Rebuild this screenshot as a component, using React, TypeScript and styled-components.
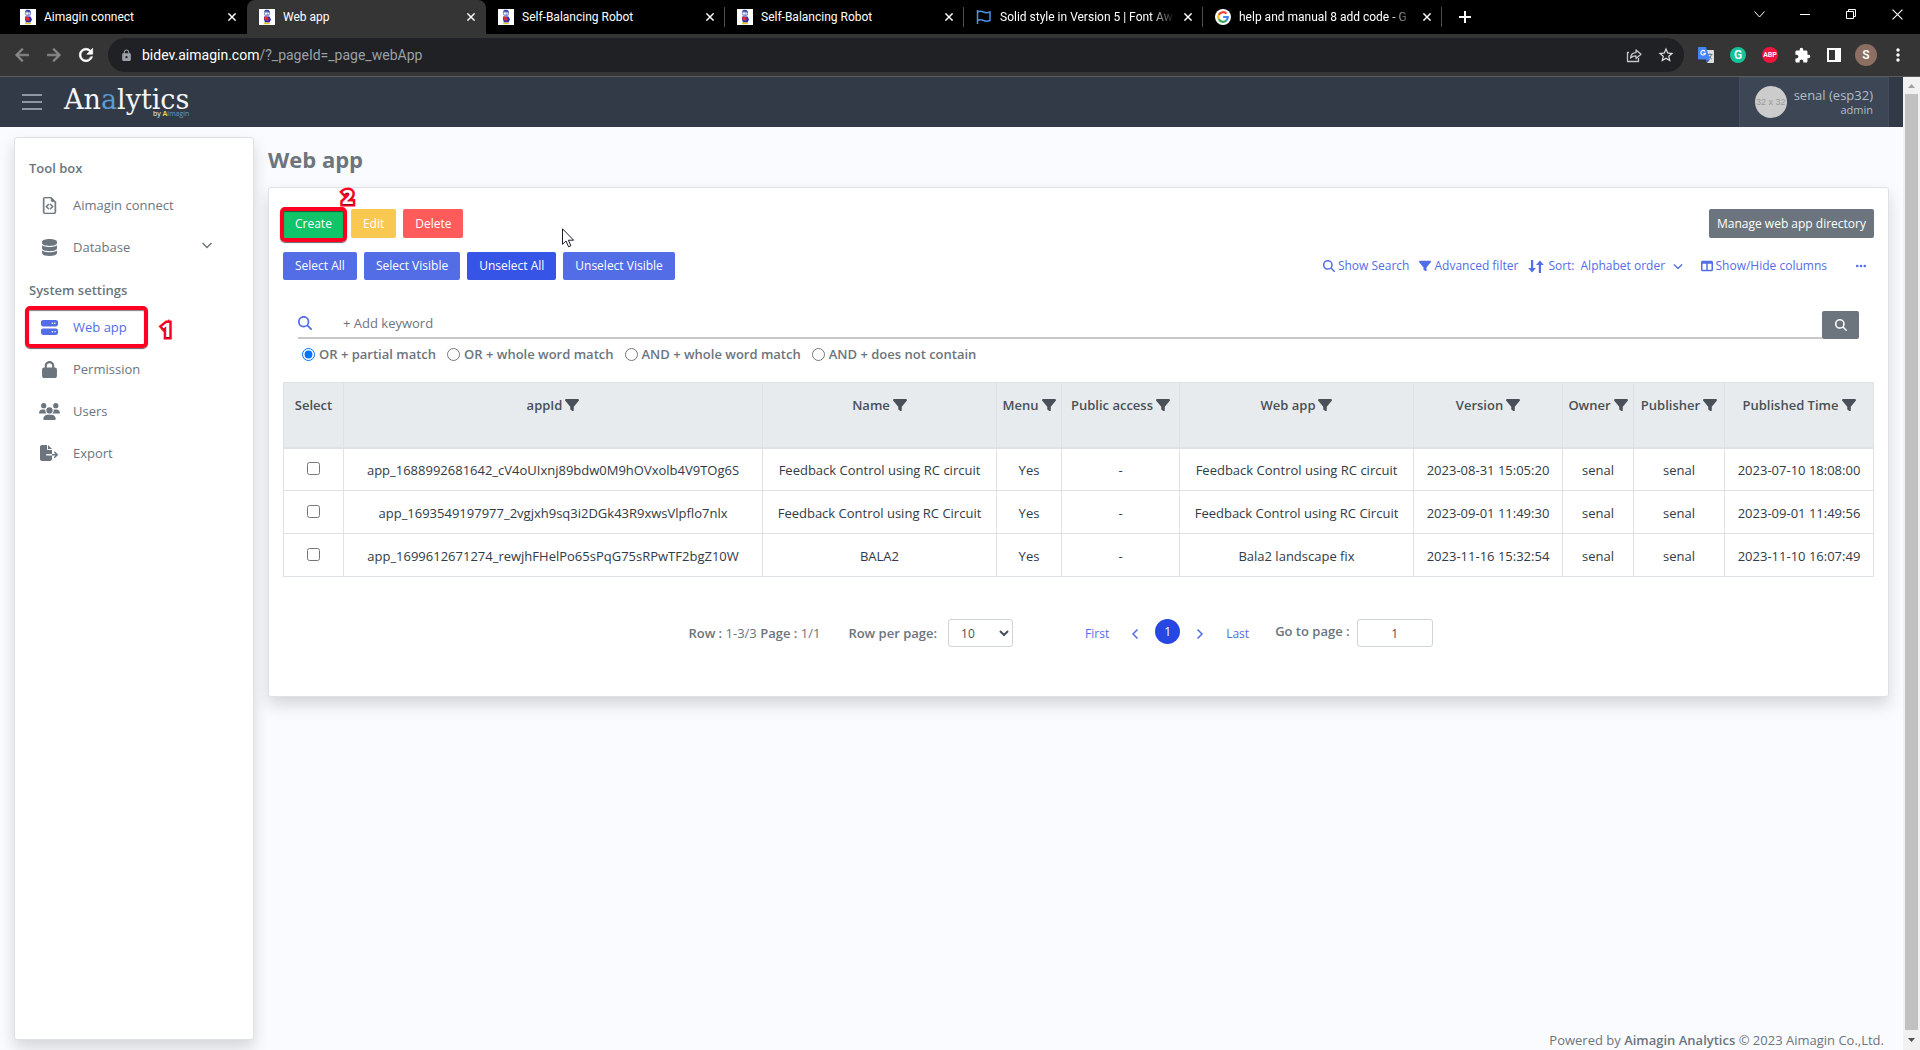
import React, { useState } from "react";
import styled, { createGlobalStyle, css } from "styled-components";
import {
  FaDatabase,
  FaServer,
  FaLock,
  FaUsers,
  FaFileExport,
  FaFilter,
  FaMagnifyingGlass,
  FaTableColumns,
  FaEllipsis,
  FaChevronDown,
} from "react-icons/fa6";
import { BsFileEarmarkCode } from "react-icons/bs";
import { MdArrowBack, MdArrowForward, MdRefresh, MdLock, MdStarBorder, MdExtension, MdMoreVert } from "react-icons/md";

const color = {
  page: "#fafbfe",
  text: "#6c757d",
  primary: "#536de6",
  primaryDark: "#3654e5",
  header: "#333a47",
  border: "#dee2e6",
  mark: "#fe0022",
};

const GlobalStyle = createGlobalStyle`
  *, *::before, *::after { box-sizing: border-box; }
  body {
    margin: 0;
    background: ${color.page};
    color: ${color.text};
    font: 400 13px/20px "Open Sans", "Noto Sans", sans-serif;
  }
  button, input, select { font: inherit; color: inherit; margin: 0; }
  button { padding: 0; border: 0; background: none; }
  a { color: inherit; text-decoration: none; }
  svg { display: block; flex: none; }
`;

const Window = styled.div`
  min-height: 100vh;
  display: flex;
  flex-direction: column;
`;

/* ---------- browser chrome ---------- */

const TabStrip = styled.div`
  display: flex;
  height: 34px;
  padding-left: 8px;
  background: #000;
  color: #fff;
  font: 12px/16px Roboto, sans-serif;
`;

const Tab = styled.div<{ $active?: boolean; $rule?: boolean }>`
  position: relative;
  flex: 0 1 239px;
  min-width: 0;
  display: flex;
  align-items: center;
  gap: 8px;
  padding: 0 10px 0 12px;
  ${(p) =>
    p.$active &&
    css`
      background: #353535;
      border-radius: 8px 8px 0 0;
    `}
  ${(p) =>
    p.$rule &&
    css`
      &::after {
        content: "";
        position: absolute;
        right: 0;
        top: 7px;
        height: 20px;
        width: 1px;
        background: #4d4d4d;
      }
    `}
`;

const TabTitle = styled.span<{ $fade?: boolean }>`
  flex: 1;
  overflow: hidden;
  white-space: nowrap;
  ${(p) =>
    p.$fade &&
    css`
      mask-image: linear-gradient(to right, #000 86%, transparent);
    `}
`;

const TabClose = styled.button`
  width: 10px;
  height: 16px;
  display: grid;
  place-items: center;
`;

const NewTab = styled.button`
  width: 46px;
  display: grid;
  place-items: center;
`;

const WindowControls = styled.div`
  display: flex;
  margin-left: auto;
`;

const WindowButton = styled.button`
  width: 46px;
  height: 28px;
  display: grid;
  place-items: center;
`;

const Toolbar = styled.div`
  display: flex;
  align-items: center;
  height: 43px;
  padding: 0 6px;
  background: #353535;
  border-bottom: 1px solid #5c5c5c;
`;

const ToolButton = styled.button<{ $tone?: string; $heavy?: boolean }>`
  width: 32px;
  height: 32px;
  display: grid;
  place-items: center;
  color: ${(p) => p.$tone ?? "#fff"};
  ${(p) =>
    p.$heavy &&
    css`
      path:not([fill="none"]) {
        stroke: currentColor;
        stroke-width: 0.8px;
      }
    `}
`;

const Omnibox = styled.div`
  flex: 1;
  display: flex;
  align-items: center;
  height: 34px;
  margin: 0 6px;
  padding: 0 2px 0 12px;
  border-radius: 17px;
  background: #202124;
  color: #9aa0a6;
  font: 14px/20px Roboto, sans-serif;
`;

const Address = styled.div`
  flex: 1;
  margin-left: 9px;
  white-space: nowrap;
  b {
    font-weight: 400;
    color: #fff;
  }
`;

const Badge = styled.span<{ $bg: string; $size: number; $font: number }>`
  display: grid;
  place-items: center;
  width: ${(p) => p.$size}px;
  height: ${(p) => p.$size}px;
  border-radius: 50%;
  background: ${(p) => p.$bg};
  color: #fff;
  font: 600 ${(p) => p.$font}px/16px Roboto, sans-serif;
`;

/* ---------- page frame ---------- */

const Viewport = styled.div`
  flex: 1;
  display: flex;
`;

const Page = styled.div`
  flex: 1;
  min-width: 0;
  display: flex;
  flex-direction: column;
`;

const Scrollbar = styled.div`
  width: 17px;
  display: flex;
  flex-direction: column;
  align-items: center;
  background: #f1f1f1;
`;

const ScrollArrow = styled.span<{ $down?: boolean }>`
  display: grid;
  place-items: center;
  height: ${(p) => (p.$down ? 20 : 17)}px;
  svg {
    transform: ${(p) => (p.$down ? "rotate(180deg)" : "none")};
  }
`;

const ScrollThumb = styled.div`
  flex: 1;
  width: 13px;
  background: #c1c1c1;
`;

const Header = styled.header`
  display: flex;
  align-items: center;
  height: 50px;
  padding: 0 14px 0 22px;
  background: ${color.header};
`;

const MenuButton = styled.button`
  width: 20px;
  height: 16px;
  display: flex;
  flex-direction: column;
  justify-content: space-between;
  span {
    height: 2px;
    background: #8f97a4;
  }
`;

const Logo = styled.a`
  display: flex;
  flex-direction: column;
  align-items: flex-end;
  margin-left: 22px;
  color: #f4f6f8;
  font: 27px/28px "DejaVu Serif", serif;
  i {
    font-style: normal;
    color: #5b9bd5;
  }
  small {
    margin-top: -4px;
    font: 7px/8px "Open Sans", sans-serif;
  }
  small em {
    font-style: normal;
    font-weight: 700;
    color: #d7d94a;
  }
`;

const UserPanel = styled.div`
  display: flex;
  align-items: center;
  gap: 7px;
  height: 50px;
  margin-left: auto;
  padding: 0 15px 1px;
  border: 1px solid #424c5c;
  border-bottom: 0;
  background: #3c4655;
  color: #b3bbc7;
  text-align: right;
`;

const UserAvatar = styled.div`
  width: 32px;
  height: 32px;
  overflow: hidden;
  display: grid;
  place-items: center;
  border-radius: 50%;
  background: #ccc;
  color: #999;
  font: 9px/12px "Liberation Sans", sans-serif;
  white-space: nowrap;
`;

const UserName = styled.div`
  font-size: 13px;
  line-height: 16px;
  small {
    display: block;
    font-size: 11px;
    line-height: 14px;
  }
`;

const Body = styled.div`
  flex: 1;
  display: flex;
  gap: 14px;
  padding: 10px 14px 0;
`;

const panel = css`
  background: #fff;
  border: 1px solid ${color.border};
  border-radius: 3px;
  box-shadow: 0 8px 16px rgba(0, 0, 0, 0.15);
`;

const Sidebar = styled.nav`
  ${panel}
  width: 240px;
  flex: none;
  margin-bottom: 10px;
  padding-top: 14px;
`;

const NavLabel = styled.h2`
  margin: 0;
  padding-left: 14px;
  font-size: 13px;
  line-height: 32px;
  font-weight: 600;
  ul + & {
    margin-top: 6px;
  }
`;

const NavList = styled.ul`
  margin: 0;
  padding: 0;
  list-style: none;
`;

const NavItem = styled.li`
  position: relative;
`;

const NavLink = styled.a<{ $active?: boolean }>`
  display: flex;
  align-items: center;
  height: 42px;
  padding: 0 41px 0 23px;
  color: ${(p) => (p.$active ? color.primary : color.text)};
  svg:last-child:not(:first-child) {
    margin-left: auto;
  }
`;

const NavIcon = styled.span<{ $heavy?: boolean }>`
  width: 22px;
  margin-right: 13px;
  display: grid;
  place-items: center;
  ${(p) => p.$heavy && "svg { stroke: currentColor; stroke-width: 0.5px; }"}
`;

const Main = styled.main`
  flex: 1;
  min-width: 0;
  display: flex;
  flex-direction: column;
`;

const Title = styled.h1`
  margin: 0 0 8px;
  padding-top: 2px;
  font-size: 22px;
  line-height: 40px;
  font-weight: 700;
`;

const Card = styled.section`
  ${panel}
  padding: 21px 14px 49px;
`;

const Footer = styled.footer`
  margin-top: auto;
  padding: 0 5px 1px 0;
  line-height: 18px;
  text-align: right;
  font-size: 13px;
  b {
    font-weight: 600;
  }
`;

/* ---------- callouts ---------- */

const Outline = styled.span<{ $inset: string }>`
  position: absolute;
  inset: ${(p) => p.$inset};
  border: 4px solid ${color.mark};
  border-radius: 5px;
  box-shadow: 0 1px 1px rgba(0, 0, 0, 0.6), inset 0 1px 1px rgba(0, 0, 0, 0.5);
  pointer-events: none;
`;

const Digit = styled.span<{ $left: number; $top: number }>`
  position: absolute;
  left: ${(p) => p.$left}px;
  top: ${(p) => p.$top}px;
  color: #fff;
  font: 700 20px/20px "Open Sans", sans-serif;
  -webkit-text-stroke: 5px ${color.mark};
  paint-order: stroke fill;
  text-shadow: 0 1px 1px rgba(0, 0, 0, 0.5);
  pointer-events: none;
`;

const Pointer = styled.svg`
  position: absolute;
  left: 279px;
  top: 19px;
`;

/* ---------- card content ---------- */

const Bar = styled.div`
  position: relative;
  display: flex;
  align-items: center;
  gap: 7px;
  & + & {
    margin-top: 14px;
  }
`;

const tones = {
  success: "#10c469",
  warning: "#f9c851",
  danger: "#ff5b5b",
  primary: color.primary,
  pressed: color.primaryDark,
  secondary: "#6c757d",
};

const Button = styled.button<{ $tone: keyof typeof tones; $tall?: boolean; $end?: boolean }>`
  height: ${(p) => (p.$tall ? 29 : 28)}px;
  padding: 0 12px;
  border-radius: 2px;
  background: ${(p) => tones[p.$tone]};
  color: #fff;
  font-size: 12px;
  line-height: 20px;
  white-space: nowrap;
  ${(p) =>
    p.$end &&
    css`
      margin-left: auto;
      padding: 0 8px;
    `}
`;

const Marked = styled.span`
  position: relative;
  display: flex;
`;

const Tools = styled.div`
  display: flex;
  align-items: center;
  gap: 10px;
  margin-left: auto;
  padding-right: 7px;
  color: ${color.primary};
  font-size: 12px;
`;

const Tool = styled.button`
  display: flex;
  align-items: center;
  gap: 3px;
`;

const Sort = styled.label`
  display: flex;
  align-items: center;
  gap: 4px;
  margin-right: 8px;
`;

const SortSelect = styled.select`
  width: 88px;
  margin-left: 2px;
  padding: 0;
  border: 0;
  background: none;
  appearance: none;
`;

const MoreButton = styled.button`
  margin-left: 18px;
`;

const SearchRow = styled.div`
  display: flex;
  align-items: stretch;
  margin: 31px 15px 0;
`;

const SearchField = styled.label`
  flex: 1;
  display: flex;
  align-items: center;
  height: 28px;
  padding-bottom: 2px;
  border-bottom: 2px solid #c8c8c8;
  color: ${color.primary};
`;

const SearchInput = styled.input`
  flex: 1;
  margin-left: 31px;
  padding: 0;
  border: 0;
  outline: 0;
  background: none;
  color: ${color.text};
  &::placeholder {
    color: ${color.text};
    opacity: 1;
  }
`;

const SearchButton = styled.button`
  width: 37px;
  display: grid;
  place-items: center;
  border-radius: 2px;
  background: #6c757d;
  color: #fff;
`;

const Modes = styled.div`
  display: flex;
  gap: 11px;
  margin: 5px 0 18px 19px;
`;

const Mode = styled.label`
  display: flex;
  align-items: center;
  gap: 4px;
  font-weight: 600;
  input {
    width: 13px;
    height: 13px;
    accent-color: #0075ff;
  }
`;

const Table = styled.table`
  width: 100%;
  table-layout: fixed;
  border-collapse: collapse;
  text-align: center;
  white-space: nowrap;
  color: #313a46;
  th,
  td {
    padding: 0;
    border: 1px solid ${color.border};
  }
  th {
    height: 65px;
    padding-top: 12px;
    vertical-align: top;
    border-bottom-width: 2px;
    background: #e7ebee;
    color: #495057;
    font-weight: 600;
  }
  td {
    height: 43px;
    padding-top: 2px;
  }
  input {
    display: block;
    width: 13px;
    height: 13px;
    margin: 0 auto 3px;
  }
`;

const HeadCell = styled.span`
  display: inline-flex;
  align-items: center;
  gap: 3px;
`;

const Pager = styled.div`
  display: flex;
  align-items: center;
  justify-content: center;
  margin-top: 42px;
  padding-right: 36px;
  b {
    font-weight: 600;
  }
`;

const PageSize = styled.label`
  display: flex;
  align-items: center;
  gap: 11px;
  margin-left: 28px;
  font-weight: 600;
`;

const field = css`
  height: 28px;
  border: 1px solid #ced4da;
  border-radius: 3px;
  background: #fff;
  color: #495057;
  font-size: 12px;
  font-weight: 400;
`;

const SizeSelect = styled.select`
  ${field}
  width: 65px;
  padding-left: 8px;
`;

const PageNav = styled.div`
  display: flex;
  align-items: center;
  margin: 0 20px 0 66px;
  gap: 14px;
  color: ${color.primary};
  font-size: 12px;
`;

const PageLink = styled.button<{ $arrow?: boolean }>`
  padding: 2px ${(p) => (p.$arrow ? 1 : 6)}px 0;
`;

const CurrentPage = styled.button`
  width: 25px;
  height: 25px;
  margin-bottom: 3px;
  border-radius: 50%;
  background: #2747e3;
  color: #fff;
`;

const GoTo = styled.label`
  display: flex;
  align-items: center;
  gap: 7px;
  font-weight: 600;
  span {
    padding-bottom: 4px;
  }
`;

const GoToInput = styled.input`
  ${field}
  width: 76px;
  text-align: center;
`;

/* ---------- drawings ---------- */

const RobotIcon = () => (
  <svg width="16" height="16" viewBox="0 0 16 16">
    <rect width="16" height="16" fill="#fff" />
    <ellipse cx="8" cy="4" rx="3.1" ry="3.2" fill="#8492d2" />
    <path d="M5 2.500 6.500.8l3 .2L11 3.500 8 2.600z" fill="#33479c" />
    <circle cx="7" cy="4.600" r="1.100" fill="#fff" />
    <circle cx="9.300" cy="4.400" r=".9" fill="#dfe4ff" />
    <path d="M5 7.500h5.500l1.500 3-1.500 3H6L5 10.500z" fill="#2b2fb0" />
    <path d="M4.800 8.500 7 7.200l2.800 2.300L9 11.800l-3-.6z" fill="#e12c2c" />
    <path d="M5.200 13.400h5.600v1.800H4.800z" fill="#e4c53a" />
  </svg>
);

const FlagIcon = () => (
  <svg width="16" height="16" viewBox="0 0 16 16" fill="none" stroke="#4f8fe6" strokeWidth="1.500">
    <path d="M1.500 1v14M1.500 3c2-1 4-1 6 0s4.500.800 6.500 0v8.500c-2 .800-4.500 1-6.500 0s-4-1-6 0" />
  </svg>
);

const GoogleIcon = () => (
  <svg width="16" height="16" viewBox="0 0 16 16" fill="none" strokeWidth="2.200">
    <circle cx="8" cy="8" r="8" fill="#fff" />
    <path d="M11.500 4.600A4.800 4.800 0 0 0 3.800 5.800" stroke="#ea4335" />
    <path d="M3.800 5.800a4.800 4.800 0 0 0 0 4.400" stroke="#fbbc05" />
    <path d="M3.800 10.200a4.800 4.800 0 0 0 7.400 1.400" stroke="#34a853" />
    <path d="M11.200 11.600A4.800 4.800 0 0 0 12.800 8H8.200" stroke="#4285f4" />
  </svg>
);

const CrossIcon = ({ size = 8, width = 1.8 }: { size?: number; width?: number }) => (
  <svg width={size} height={size} viewBox="0 0 10 10" stroke="#fff" strokeWidth={width}>
    <path d="M.5.5l9 9M9.500.5l-9 9" />
  </svg>
);

const ShareIcon = () => (
  <svg width="16" height="16" viewBox="0 0 16 16" fill="none" stroke="#c4c7c5" strokeWidth="1.300" strokeLinejoin="round">
    <path d="M3 5.500H1.500v9h11V11M4.500 11c.3-3.500 2-5.200 5.500-5.300V3l5 4.300-5 4.200V8.900c-2.500 0-4.200.600-5.500 2.100z" />
  </svg>
);

const TranslateIcon = () => (
  <svg width="16" height="16" viewBox="0 0 16 16">
    <path d="M6 3h9.200a.8.8 0 0 1 .8.800v11.400a.8.8 0 0 1-.8.800H9z" fill="#dcdfe3" />
    <path d="M9.500 7.500h5M12 6.500v1M13.500 7.500c-.5 2-1.800 3.500-3.300 4.500M10.800 9c.6 1.200 1.700 2.300 3 3" stroke="#5f7c8a" fill="none" />
    <path d="M.8 0H8l4 12.500H.8a.8.8 0 0 1-.8-.800V.8A.8.8 0 0 1 .8 0z" fill="#4285f4" />
    <path d="M9 16l3-3.500H8z" fill="#2a56c6" />
    <path d="M7 4.300A2.300 2.300 0 1 0 7.400 6.300H5.200" stroke="#fff" strokeWidth="1.100" fill="none" />
  </svg>
);

const SidePanelIcon = () => (
  <svg width="14" height="14" viewBox="0 0 14 14">
    <path d="M0 0h14v14H0zM2 2v10h6V2z" fill="#fff" fillRule="evenodd" />
  </svg>
);

const SortIcon = () => (
  <svg width="16" height="13" viewBox="0 0 16 13" fill="currentColor">
    <path d="M3 0h2.200v8H8l-3.900 4.500L.2 8H3zM10.800 13H13V5h2.800L11.900.5 8 5h2.800z" />
  </svg>
);

const ChevronIcon = ({ d }: { d: string }) => (
  <svg width="10" height="12" viewBox="0 0 10 12" fill="none" stroke="currentColor" strokeWidth="1.500">
    <path d={d} />
  </svg>
);

const TriangleIcon = ({ fill }: { fill: string }) => (
  <svg width="7" height="4" viewBox="0 0 7 4">
    <path d="M3.500 0 7 4H0z" fill={fill} />
  </svg>
);

/* ---------- data ---------- */

const tabs = [
  { title: "Aimagin connect", icon: <RobotIcon /> },
  { title: "Web app", icon: <RobotIcon />, active: true },
  { title: "Self-Balancing Robot", icon: <RobotIcon />, rule: true },
  { title: "Self-Balancing Robot", icon: <RobotIcon />, rule: true },
  { title: "Solid style in Version 5 | Font Aw", icon: <FlagIcon />, rule: true, fade: true },
  { title: "help and manual 8 add code - G", icon: <GoogleIcon />, rule: true, fade: true },
];

const columns = [
  { label: "Select", width: 60, plain: true },
  { label: "appId", width: 419 },
  { label: "Name", width: 234 },
  { label: "Menu", width: 65 },
  { label: "Public access", width: 118 },
  { label: "Web app", width: 234 },
  { label: "Version", width: 149 },
  { label: "Owner", width: 71 },
  { label: "Publisher", width: 91 },
  { label: "Published Time", width: 149 },
];

const rows = [
  ["app_1688992681642_cV4oUIxnj89bdw0M9hOVxolb4V9TOg6S", "Feedback Control using RC circuit", "Yes", "-", "Feedback Control using RC circuit", "2023-08-31 15:05:20", "senal", "senal", "2023-07-10 18:08:00"],
  ["app_1693549197977_2vgjxh9sq3i2DGk43R9xwsVlpflo7nlx", "Feedback Control using RC Circuit", "Yes", "-", "Feedback Control using RC Circuit", "2023-09-01 11:49:30", "senal", "senal", "2023-09-01 11:49:56"],
  ["app_1699612671274_rewjhFHelPo65sPqG75sRPwTF2bgZ10W", "BALA2", "Yes", "-", "Bala2 landscape fix", "2023-11-16 15:32:54", "senal", "senal", "2023-11-10 16:07:49"],
];

const modes = ["OR + partial match", "OR + whole word match", "AND + whole word match", "AND + does not contain"];

/* ---------- components ---------- */

function BrowserChrome() {
  return (
    <>
      <TabStrip>
        {tabs.map((t, i) => (
          <Tab key={i} $active={t.active} $rule={t.rule}>
            {t.icon}
            <TabTitle $fade={t.fade}>{t.title}</TabTitle>
            <TabClose aria-label="Close tab">
              <CrossIcon />
            </TabClose>
          </Tab>
        ))}
        <NewTab aria-label="New tab">
          <svg width="12" height="12" viewBox="0 0 12 12" stroke="#fff" strokeWidth="2">
            <path d="M6 0v12M0 6h12" />
          </svg>
        </NewTab>
        <WindowControls>
          <WindowButton aria-label="Search tabs">
            <svg width="11" height="7" viewBox="0 0 11 7" fill="none" stroke="#fff">
              <path d="M.5.5l5 5.500 5-5.500" />
            </svg>
          </WindowButton>
          <WindowButton aria-label="Minimize">
            <svg width="10" height="1" viewBox="0 0 10 1">
              <rect width="10" height="1" fill="#fff" />
            </svg>
          </WindowButton>
          <WindowButton aria-label="Restore">
            <svg width="10" height="10" viewBox="0 0 10 10" fill="none" stroke="#fff">
              <path d="M.5 2.500h7v7h-7zM2.500 2.500v-2h7v7h-2" />
            </svg>
          </WindowButton>
          <WindowButton aria-label="Close">
            <CrossIcon size={11} width={1} />
          </WindowButton>
        </WindowControls>
      </TabStrip>
      <Toolbar>
        <ToolButton aria-label="Back" $tone="#8a8a8a" $heavy><MdArrowBack size={20} /></ToolButton>
        <ToolButton aria-label="Forward" $tone="#8a8a8a" $heavy><MdArrowForward size={20} /></ToolButton>
        <ToolButton aria-label="Reload" $heavy><MdRefresh size={20} /></ToolButton>
        <Omnibox>
          <MdLock size={13} />
          <Address>
            <b>bidev.aimagin.com</b>/?_pageId=_page_webApp
          </Address>
          <ToolButton aria-label="Share"><ShareIcon /></ToolButton>
          <ToolButton aria-label="Bookmark" $tone="#dfe1e3"><MdStarBorder size={18} /></ToolButton>
        </Omnibox>
        <ToolButton aria-label="Translate"><TranslateIcon /></ToolButton>
        <ToolButton><Badge $bg="#15c39a" $size={16} $font={12}>G</Badge></ToolButton>
        <ToolButton><Badge $bg="#f01440" $size={16} $font={7}>ABP</Badge></ToolButton>
        <ToolButton aria-label="Extensions"><MdExtension size={17} /></ToolButton>
        <ToolButton aria-label="Side panel"><SidePanelIcon /></ToolButton>
        <ToolButton><Badge $bg="#8d6e63" $size={22} $font={12}>S</Badge></ToolButton>
        <ToolButton aria-label="Menu"><MdMoreVert size={20} /></ToolButton>
      </Toolbar>
    </>
  );
}

function SideNav() {
  return (
    <Sidebar>
      <NavLabel>Tool box</NavLabel>
      <NavList>
        <NavItem>
          <NavLink href="#connect">
            <NavIcon $heavy><BsFileEarmarkCode size={17} /></NavIcon>Aimagin connect
          </NavLink>
        </NavItem>
        <NavItem>
          <NavLink href="#database">
            <NavIcon><FaDatabase size={17} /></NavIcon>Database
            <ChevronIcon d="M.5 2l4.500 4.500L9.500 2" />
          </NavLink>
        </NavItem>
      </NavList>
      <NavLabel>System settings</NavLabel>
      <NavList>
        <NavItem>
          <NavLink href="#webapp" $active>
            <NavIcon><FaServer size={17} /></NavIcon>Web app
          </NavLink>
          <Outline $inset="0 105px 0 10px" />
          <Digit $left={146} $top={14}>1</Digit>
        </NavItem>
        <NavItem>
          <NavLink href="#permission">
            <NavIcon><FaLock size={17} /></NavIcon>Permission
          </NavLink>
        </NavItem>
        <NavItem>
          <NavLink href="#users">
            <NavIcon><FaUsers size={21} /></NavIcon>Users
          </NavLink>
        </NavItem>
        <NavItem>
          <NavLink href="#export">
            <NavIcon><FaFileExport size={18} /></NavIcon>Export
          </NavLink>
        </NavItem>
      </NavList>
    </Sidebar>
  );
}

function AppTable() {
  return (
    <Table>
      <colgroup>
        {columns.map((c) => (
          <col key={c.label} style={{ width: c.width }} />
        ))}
      </colgroup>
      <thead>
        <tr>
          {columns.map((c) => (
            <th key={c.label}>
              <HeadCell>
                {c.label}
                {!c.plain && <FaFilter size={14} />}
              </HeadCell>
            </th>
          ))}
        </tr>
      </thead>
      <tbody>
        {rows.map((r) => (
          <tr key={r[0]}>
            <td>
              <input type="checkbox" aria-label={`Select ${r[0]}`} />
            </td>
            {r.map((v, i) => (
              <td key={i}>{v}</td>
            ))}
          </tr>
        ))}
      </tbody>
    </Table>
  );
}

export default function App() {
  const [mode, setMode] = useState(0);
  const [goTo, setGoTo] = useState("1");
  return (
    <Window>
      <GlobalStyle />
      <BrowserChrome />
      <Viewport>
        <Page>
          <Header>
            <MenuButton aria-label="Toggle menu"><span /><span /><span /></MenuButton>
            <Logo href="#home">
              <span>An<i>a</i>lytics</span>
              <small>by <em>A</em><i>imagin</i></small>
            </Logo>
            <UserPanel>
              <UserAvatar>32 x 32</UserAvatar>
              <UserName>
                senal (esp32)
                <small>admin</small>
              </UserName>
            </UserPanel>
          </Header>
          <Body>
            <SideNav />
            <Main>
              <Title>Web app</Title>
              <Card>
                <Bar>
                  <Marked>
                    <Button $tone="success" $tall>Create</Button>
                    <Outline $inset="-2px -3px -4px -3px" />
                    <Digit $left={59} $top={-22}>2</Digit>
                  </Marked>
                  <Button $tone="warning" $tall>Edit</Button>
                  <Button $tone="danger" $tall>Delete</Button>
                  <Button $tone="secondary" $tall $end>Manage web app directory</Button>
                  <Pointer width="13" height="20" viewBox="0 0 13 20">
                    <path d="M.5.8v15.500l3.500-3.300 2.600 5.800 2.300-1-2.500-5.600h5.200z" fill="#fff" stroke="#1c1c28" />
                  </Pointer>
                </Bar>
                <Bar>
                  <Button $tone="primary">Select All</Button>
                  <Button $tone="primary">Select Visible</Button>
                  <Button $tone="pressed">Unselect All</Button>
                  <Button $tone="primary">Unselect Visible</Button>
                  <Tools>
                    <Tool><FaMagnifyingGlass size={12} />Show Search</Tool>
                    <Tool><FaFilter size={12} />Advanced filter</Tool>
                    <Sort>
                      <SortIcon />
                      Sort:
                      <SortSelect defaultValue="alpha">
                        <option value="alpha">Alphabet order</option>
                      </SortSelect>
                      <FaChevronDown size={10} />
                    </Sort>
                    <Tool><FaTableColumns size={12} />Show/Hide columns</Tool>
                    <MoreButton aria-label="More"><FaEllipsis size={12} /></MoreButton>
                  </Tools>
                </Bar>
                <SearchRow>
                  <SearchField>
                    <FaMagnifyingGlass size={14} />
                    <SearchInput aria-label="Keyword" placeholder="+ Add keyword" />
                  </SearchField>
                  <SearchButton aria-label="Search"><FaMagnifyingGlass size={12} /></SearchButton>
                </SearchRow>
                <Modes>
                  {modes.map((m, i) => (
                    <Mode key={m}>
                      <input type="radio" name="mode" checked={mode === i} onChange={() => setMode(i)} />
                      {m}
                    </Mode>
                  ))}
                </Modes>
                <AppTable />
                <Pager>
                  <span><b>Row :</b> 1-3/3 <b>Page :</b> 1/1</span>
                  <PageSize>
                    Row per page:
                    <SizeSelect defaultValue="10">
                      <option>10</option>
                      <option>25</option>
                      <option>50</option>
                    </SizeSelect>
                  </PageSize>
                  <PageNav>
                    <PageLink>First</PageLink>
                    <PageLink $arrow aria-label="Previous page"><ChevronIcon d="M7.500 1.500L3 6l4.500 4.500" /></PageLink>
                    <CurrentPage>1</CurrentPage>
                    <PageLink $arrow aria-label="Next page"><ChevronIcon d="M2.500 1.500L7 6l-4.500 4.500" /></PageLink>
                    <PageLink>Last</PageLink>
                  </PageNav>
                  <GoTo>
                    <span>Go to page :</span>
                    <GoToInput value={goTo} onChange={(e) => setGoTo(e.target.value)} />
                  </GoTo>
                </Pager>
              </Card>
              <Footer>
                Powered by <b>Aimagin Analytics</b> © 2023 Aimagin Co.,Ltd.
              </Footer>
            </Main>
          </Body>
        </Page>
        <Scrollbar>
          <ScrollArrow><TriangleIcon fill="#a3a3a3" /></ScrollArrow>
          <ScrollThumb />
          <ScrollArrow $down><TriangleIcon fill="#505050" /></ScrollArrow>
        </Scrollbar>
      </Viewport>
    </Window>
  );
}
